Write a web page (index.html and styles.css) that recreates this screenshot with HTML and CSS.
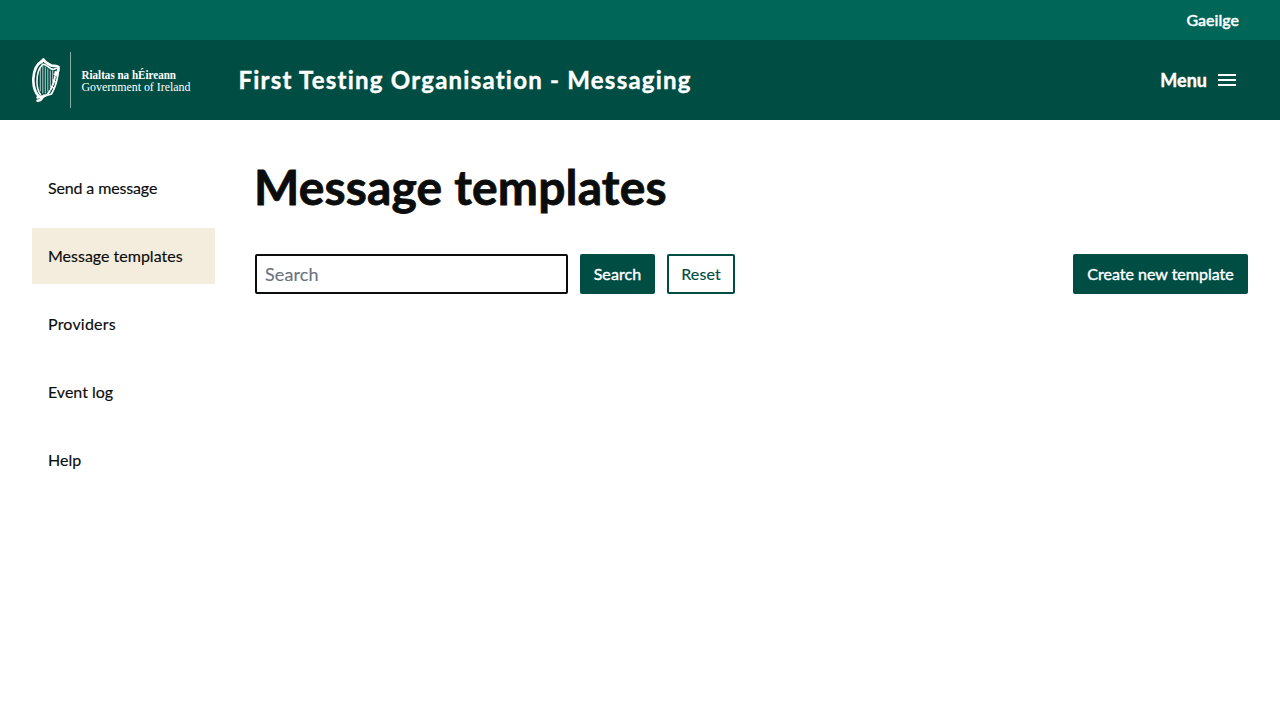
FILE: index.html
```html
<!DOCTYPE html>
<html lang="en">
<head>
<meta charset="utf-8">
<title>Message templates</title>
<link rel="stylesheet" href="styles.css">
</head>
<body>
<div class="topbar"><a class="lang">Gaeilge</a></div>
<header class="header">
  <svg class="logo" width="160" height="56" viewBox="0 0 160 56" aria-label="Government of Ireland">
    <g fill="none" stroke="#fff" stroke-linecap="round" stroke-linejoin="round">
      <path d="M10.500 9C4.500 12 1.700 18 1.300 27C1.200 35 3.500 41 7 44.500" stroke-width="2.600"/>
      <path d="M10.500 12.500C6 17 4.700 24 5 31C5.300 37 6.500 40 8.500 42.500" stroke-width="1.500"/>
      <path d="M9 10L11.500 7.500C13 11 17 12 19 13.500C21.500 14.500 24 12.800 26.500 15C27 18 26 20 24.500 22" stroke-width="2.700"/>
      <path d="M11 12.500C15 12 17 17 21 17.500L24 16.500" stroke-width="1.800"/>
      <path d="M26.500 17C26 26 23.500 35 19.500 42L13 44" stroke-width="1.700"/>
      <path d="M23.500 20C23 28 20.500 35 16.500 41L9 47" stroke-width="2" stroke-dasharray="3 2"/>
      <path d="M5.500 48.700L8.500 48L12 43.500M5.500 45.500L9.500 44.500" stroke-width="2.500"/>
      <path d="M8.300 16V39M10.800 14V41M13.300 15V41M15.800 17V39M18.300 19V35M20.700 19V30" stroke-width=".9" opacity=".8"/>
      <path d="M22 22L24.500 24M21 28L23.500 30M19 34L22 36" stroke-width="1.200"/>
    </g>
    <path d="M38.500 0V56" stroke="#fff" stroke-opacity=".55"/>
    <text class="logo-ga" x="49.500" y="27" textLength="94.500" lengthAdjust="spacingAndGlyphs">Rialtas na hÉireann</text>
    <text class="logo-en" x="49.500" y="38.700" textLength="109" lengthAdjust="spacingAndGlyphs">Government of Ireland</text>
  </svg>
  <div class="title">First Testing Organisation - Messaging</div>
  <button class="menu">Menu
    <svg width="24" height="24" viewBox="0 0 24 24"><path fill="#fff" d="M3 6h18v2H3zM3 11h18v2H3zM3 16h18v2H3z"/></svg>
  </button>
</header>
<div class="page">
  <nav class="side">
    <a class="tight">Send a message</a>
    <a class="active">Message templates</a>
    <a class="loose">Providers</a>
    <a>Event log</a>
    <a>Help</a>
  </nav>
  <main class="main">
    <h1>Message templates</h1>
    <div class="toolbar">
      <input class="search" type="text" placeholder="Search">
      <button class="btn btn-search">Search</button>
      <button class="btn btn-reset">Reset</button>
      <button class="btn btn-create">Create new template</button>
    </div>
  </main>
</div>
</body>
</html>
```
FILE: styles.css
```css
* { box-sizing: border-box; }
body { margin: 0; background: #fff; color: #0b0c0c; font-family: Lato, sans-serif; font-size: 16px; line-height: 24px; -webkit-text-stroke: .15px currentColor; }
button, input { font-family: inherit; }
.topbar { height: 40px; background: #006658; display: flex; align-items: center; justify-content: flex-end; padding-right: 41px; }
.lang { color: #fff; font-weight: 500; -webkit-text-stroke: .4px #fff; }
.header { height: 80px; background: #004d44; color: #fff; display: flex; align-items: center; padding: 0 41px 0 32px; }
.logo { display: block; flex: none; }
.logo text { fill: #fff; font-family: "Liberation Serif", serif; font-size: 12px; -webkit-text-stroke: 0; }
.logo .logo-ga { font-weight: 700; font-size: 11.500px; }
.title { margin-left: 46.500px; font-size: 24px; font-weight: 700; letter-spacing: 1.230px; white-space: nowrap; -webkit-text-stroke: .4px #fff; }
.menu { margin-left: auto; display: flex; align-items: center; gap: 8px; padding: 0; border: 0; background: none; color: #fff; font-size: 18px; font-weight: 700; line-height: 24px; -webkit-text-stroke: .4px #fff; }
.page { display: flex; gap: 40px; padding: 40px 32px 0; }
.side { width: 183px; display: flex; flex-direction: column; gap: 12px; }
.side a { height: 56px; padding: 16px; white-space: nowrap; }
.side .active { background: #f4ecdd; }
.side .tight { letter-spacing: -.14px; }
.side .loose { letter-spacing: .2px; }
.main { flex: 1; }
h1 { margin: 0 0 0 -1px; font-size: 48px; line-height: 54px; font-weight: 700; letter-spacing: .15px; -webkit-text-stroke: .8px currentColor; }
.toolbar { display: flex; gap: 12px; margin-top: 40px; }
.search { width: 313px; height: 40px; border: 2px solid #0b0c0c; border-radius: 2px; padding: 0 8px; font-size: 18px; }
.search::placeholder { color: #6b7280; opacity: 1; -webkit-text-stroke: .15px #6b7280; letter-spacing: .1px; }
.btn { height: 40px; padding: 0; border: 2px solid #004d44; border-radius: 2px; background: #004d44; color: #fff; font-size: 16px; line-height: 24px; white-space: nowrap; -webkit-text-stroke: .4px currentColor; }
.btn-search { width: 75px; letter-spacing: .1px; }
.btn-reset { width: 68px; background: #fff; color: #004d44; -webkit-text-stroke: .15px currentColor; letter-spacing: .1px; }
.btn-create { width: 175px; margin-left: auto; }
```
